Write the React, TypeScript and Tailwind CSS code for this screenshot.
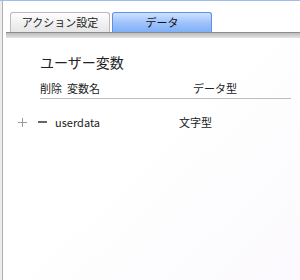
import React from "react";

const font = { fontFamily: '"Noto Sans CJK JP", "Noto Sans", sans-serif' };

const Tabs = () => (
  <div className="flex items-end gap-[2px] pl-[7px] pt-[11px]">
    <div className="flex h-[20px] w-[100px] items-center justify-center rounded-t-[3px] border border-b-0 border-[#b9b9b9] bg-gradient-to-b from-[#fdfdfd] to-[#e6e6e6] text-[11px] text-[#222]">
      アクション設定
    </div>
    <div className="flex h-[20px] w-[100px] items-center justify-center rounded-t-[3px] border border-b-0 border-[#5f8fe6] bg-gradient-to-b from-[#cfe2ff] via-[#9fc3fb] to-[#7fb0f7] text-[11px] text-[#111]">
      データ
    </div>
  </div>
);

export default function App() {
  return (
    <div
      className="flex h-[280px] w-[300px] flex-col border-t border-[#9dbfe9] bg-gradient-to-br from-white via-white to-[#fbf9fd]"
      style={font}
    >
      <div className="flex flex-1">
        <div className="w-[2px] bg-[#ececec]" />
        <div className="w-px bg-[#b0b0b0]" />
        <div className="flex flex-1 flex-col">
          <Tabs />
          <div className="ml-[3px] h-[6px] border-t border-[#8c8c8c] bg-gradient-to-b from-[#bdbdbd] to-[#e4e4e4]" />
          <div className="pl-[37px] pt-[14px] text-[#222]">
            <div className="text-[14px] leading-[20px]">ユーザー変数</div>
            <div className="mt-[8px] mr-[9px] flex border-b border-[#bdbdbd] pb-[2px] text-[11px] leading-[16px]">
              <span className="w-[27px]">削除</span>
              <span className="w-[126px]">変数名</span>
              <span>データ型</span>
            </div>
          </div>
          <div className="mt-[15px] flex h-[16px] items-center text-[11px] leading-[16px] text-[#222]">
            <svg className="ml-[15px]" width="9" height="11" viewBox="0 0 9 11">
              <path d="M0 5.5H9M4.5 1V10" stroke="#9a9a9a" strokeWidth="1" />
            </svg>
            <div className="ml-[11px] h-[2px] w-[9px] bg-[#666]" />
            <span className="ml-[8px] w-[124px]">userdata</span>
            <span>文字型</span>
          </div>
        </div>
      </div>
    </div>
  );
}
